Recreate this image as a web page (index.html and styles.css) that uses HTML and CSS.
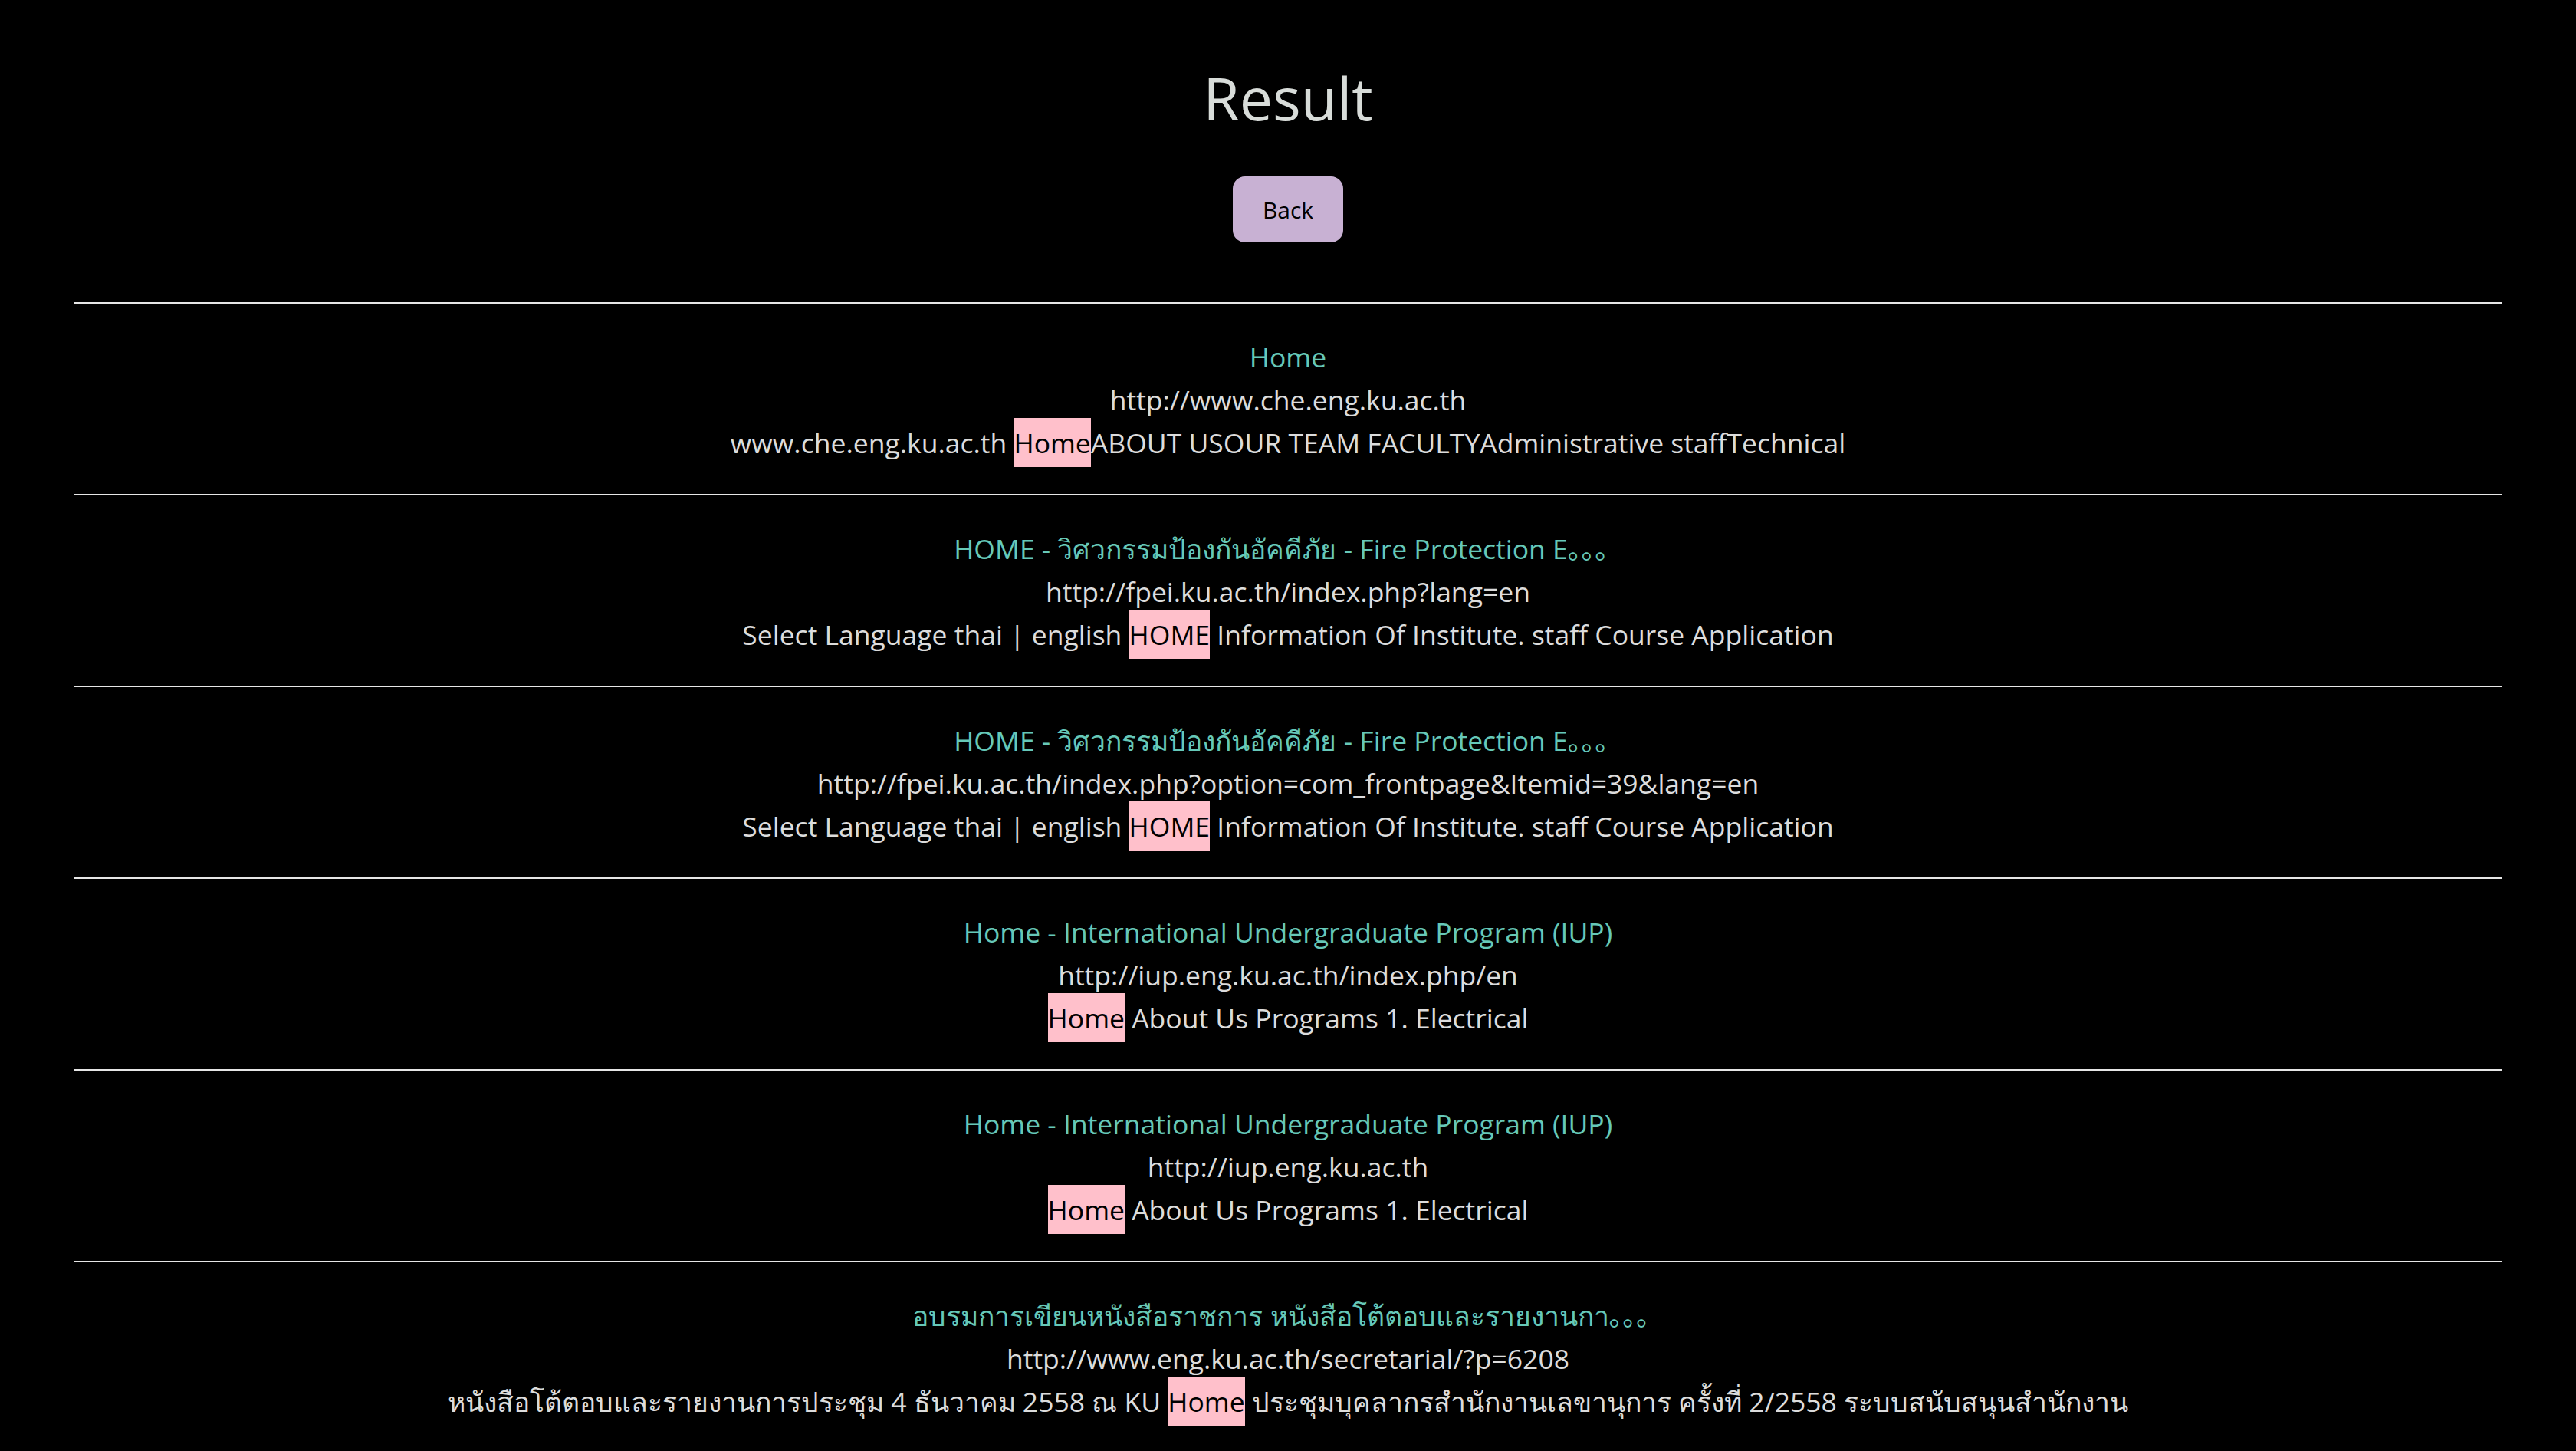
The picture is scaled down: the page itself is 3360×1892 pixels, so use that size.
FILE: index.html
```html
<!DOCTYPE html>
<html lang="th">
<head>
<meta charset="utf-8">
<title>Result</title>
<link rel="stylesheet" href="styles.css">
</head>
<body>
<header class="header">
  <h1 class="title">Result</h1>
  <button class="back" type="button">Back</button>
</header>
<main class="results">
  <section class="result">
    <div class="r-title">Home</div>
    <div class="r-url">http://www.che.eng.ku.ac.th</div>
    <div class="r-snippet">www.che.eng.ku.ac.th <mark class="hl">Home</mark>ABOUT USOUR TEAM FACULTYAdministrative staffTechnical</div>
  </section>
  <section class="result">
    <div class="r-title">HOME - วิศวกรรมป้องกันอัคคีภัย - Fire Protection E。。。</div>
    <div class="r-url">http://fpei.ku.ac.th/index.php?lang=en</div>
    <div class="r-snippet">Select Language thai | english <mark class="hl">HOME</mark> Information Of Institute. staff Course Application</div>
  </section>
  <section class="result">
    <div class="r-title">HOME - วิศวกรรมป้องกันอัคคีภัย - Fire Protection E。。。</div>
    <div class="r-url">http://fpei.ku.ac.th/index.php?option=com_frontpage&amp;Itemid=39&amp;lang=en</div>
    <div class="r-snippet">Select Language thai | english <mark class="hl">HOME</mark> Information Of Institute. staff Course Application</div>
  </section>
  <section class="result">
    <div class="r-title">Home - International Undergraduate Program (IUP)</div>
    <div class="r-url">http://iup.eng.ku.ac.th/index.php/en</div>
    <div class="r-snippet"><mark class="hl">Home</mark> About Us Programs 1. Electrical</div>
  </section>
  <section class="result">
    <div class="r-title">Home - International Undergraduate Program (IUP)</div>
    <div class="r-url">http://iup.eng.ku.ac.th</div>
    <div class="r-snippet"><mark class="hl">Home</mark> About Us Programs 1. Electrical</div>
  </section>
  <section class="result">
    <div class="r-title">อบรมการเขียนหนังสือราชการ หนังสือโต้ตอบและรายงานกา。。。</div>
    <div class="r-url">http://www.eng.ku.ac.th/secretarial/?p=6208</div>
    <div class="r-snippet">หนังสือโต้ตอบและรายงานการประชุม 4 ธันวาคม 2558 ณ KU <mark class="hl">Home</mark> ประชุมบุคลากรสำนักงานเลขานุการ ครั้งที่ 2/2558 ระบบสนับสนุนสำนักงาน</div>
  </section>
</main>
</body>
</html>
```

FILE: styles.css
```css
html, body {
  margin: 0;
  padding: 0;
  background: #000;
}

body {
  font-family: "Open Sans", "Noto Sans", "Noto Sans CJK SC", sans-serif;
  color: #dcdcdc;
  text-align: center;
}

.header {
  display: flex;
  flex-direction: column;
  align-items: center;
  padding-top: 89px;
  padding-bottom: 78px;
}

.title {
  margin: 0;
  font-size: 77px;
  font-weight: 400;
  line-height: 1;
  color: #d8dcd9;
}

.back {
  margin-top: 64px;
  width: 144px;
  height: 86px;
  border: 0;
  border-radius: 16px;
  background: #c8b1d3;
  color: #000;
  font-family: inherit;
  font-size: 30px;
  padding: 0;
}

.results {
  margin: 0 96px;
}

.result {
  border-top: 2px solid #e6e6e6;
  padding: 41px 0 39px;
  font-size: 35.5px;
  line-height: 56px;
}

.r-title {
  color: #66c8b8;
}

.r-url,
.r-snippet {
  color: #dcdcdc;
}

.hl {
  background: #ffc0cb;
  color: #000;
  padding: 8px 0;
}
```
